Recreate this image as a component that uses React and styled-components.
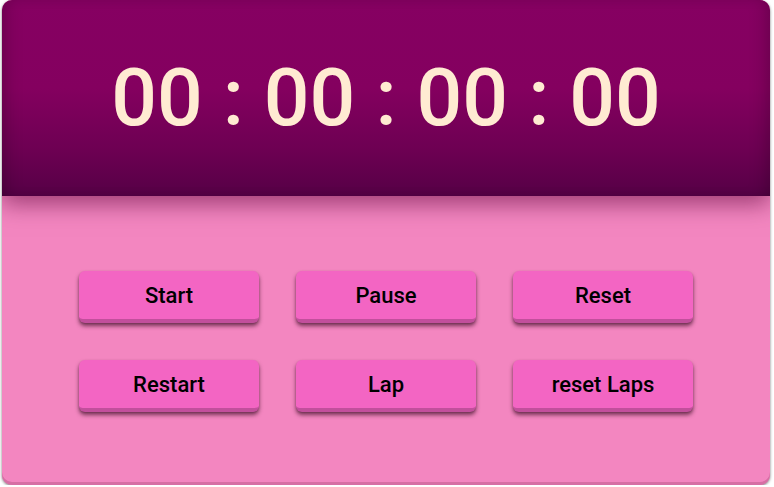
import React from "react";
import styled, { createGlobalStyle } from "styled-components";

const Global = createGlobalStyle`
  html, body { margin: 0; padding: 0; background: #ffffff; }
  body { font-family: Roboto, "Noto Sans", sans-serif; }
`;

const Card = styled.div`
  margin: 0 0 0 2px;
  width: 768px;
  height: 485px;
  border-radius: 10px;
  overflow: hidden;
  background: #f386c0;
  box-shadow: 0 1px 3px rgba(0, 0, 0, 0.55), inset 0 -3px 0 #d66fa4;
  display: flex;
  flex-direction: column;
`;

const Display = styled.div`
  position: relative;
  z-index: 1;
  height: 196px;
  flex: none;
  display: flex;
  align-items: center;
  justify-content: center;
  background: linear-gradient(to bottom, #860062 0%, #84005f 45%, #6e0053 75%, #560046 100%);
  box-shadow: inset 12px 0 18px -10px rgba(0, 0, 0, 0.25),
    inset -12px 0 18px -10px rgba(0, 0, 0, 0.25),
    0 8px 22px rgba(90, 0, 55, 0.55);
`;

const Time = styled.div`
  font-family: Roboto, sans-serif;
  font-weight: 500;
  font-size: 80.5px;
  color: #ffebd2;
  white-space: pre;
  line-height: 1;
`;

const Controls = styled.div`
  flex: 1;
  display: grid;
  grid-template-columns: repeat(3, 180px);
  grid-auto-rows: 52px;
  gap: 37px;
  justify-content: center;
  align-content: start;
  padding-top: 75px;
`;

const Button = styled.button`
  all: unset;
  box-sizing: border-box;
  display: flex;
  align-items: center;
  justify-content: center;
  height: 52px;
  border-radius: 6px;
  background: #f365c3;
  border-bottom: 4px solid #c24f9c;
  box-shadow: 0 3px 4px rgba(40, 0, 20, 0.6), 0 1px 2px rgba(0, 0, 0, 0.15);
  font-family: Roboto, sans-serif;
  font-weight: 500;
  font-size: 22px;
  color: #000;
  cursor: pointer;
  padding-top: 1px;
`;

const labels = ["Start", "Pause", "Reset", "Restart", "Lap", "reset Laps"];

export default function App() {
  return (
    <>
      <Global />
      <Card>
        <Display>
          <Time>00 : 00 : 00 : 00</Time>
        </Display>
        <Controls>
          {labels.map((l) => (
            <Button key={l}>{l}</Button>
          ))}
        </Controls>
      </Card>
    </>
  );
}
